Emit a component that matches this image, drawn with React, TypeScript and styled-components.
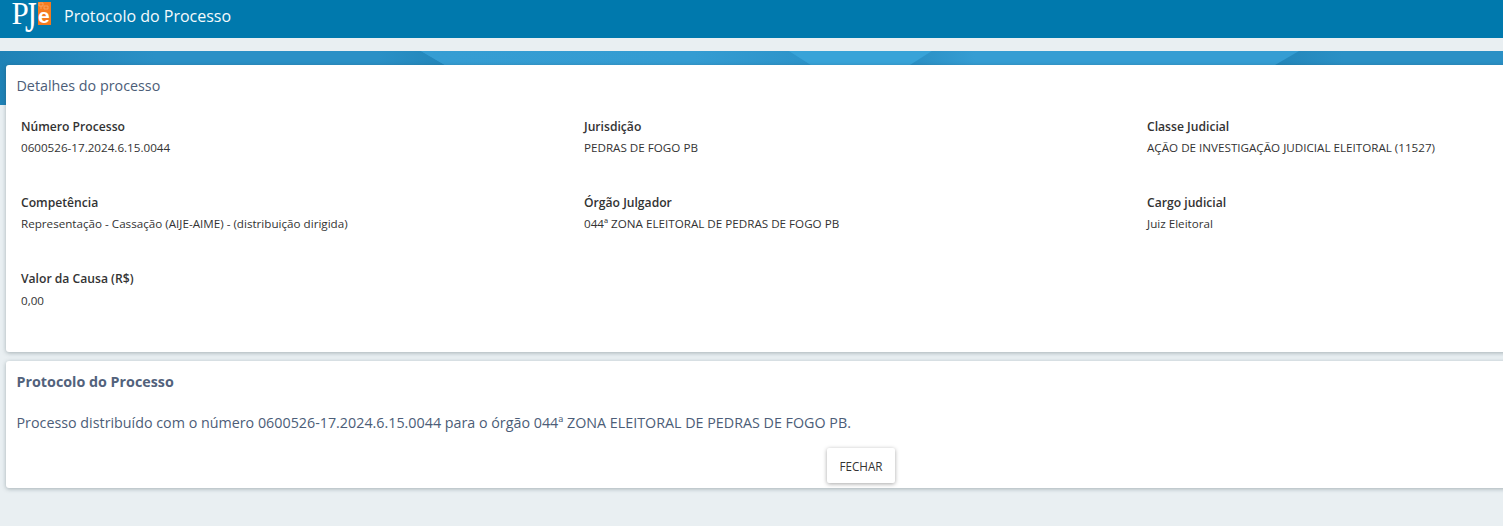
import React from 'react'
import styled, { createGlobalStyle } from 'styled-components'

const GlobalStyle = createGlobalStyle`
  html, body {
    margin: 0;
    padding: 0;
    background: #e9eff2;
    overflow: hidden;
  }
  body {
    font-family: 'Open Sans', 'Noto Sans', sans-serif;
  }
`

const Page = styled.div`
  width: 1503px;
  height: 526px;
  overflow: hidden;
  background: #e9eff2;
`

const TopBar = styled.header`
  height: 38px;
  background: #0079ad;
  display: flex;
  align-items: center;
  padding-left: 11px;
  gap: 13px;
`

const LogoBox = styled.div`
  display: flex;
  width: 40px;
  height: 38px;
`

const TopTitle = styled.h1`
  margin: 0 0 7px;
  font-size: 16px;
  font-weight: 400;
  color: #f4fafc;
`

const BannerArt = styled.svg`
  display: block;
  width: 1503px;
  height: 54px;
  margin: 13px 0 -40px;
`

const Content = styled.main`
  position: relative;
  width: 1710px;
  margin-left: 6px;
  display: flex;
  flex-direction: column;
  gap: 9px;
`

const Card = styled.section<{ $height: number }>`
  height: ${p => p.$height}px;
  box-sizing: border-box;
  background: #fff;
  border-radius: 3px;
  box-shadow: 0 1px 4px rgba(40, 60, 70, 0.35);
`

const CardHeading = styled.h2`
  margin: 0;
  padding: 11px 0 0 10.5px;
  font-size: 14.3px;
  line-height: 20px;
  font-weight: 400;
  color: #4c5d78;
`

const FieldGrid = styled.div`
  display: grid;
  grid-template-columns: repeat(3, 563px);
  grid-auto-rows: 76px;
  padding: 22px 0 0 15px;
`

const Field = styled.div`
  display: flex;
  flex-direction: column;
  gap: 4px;

  &:nth-child(7) {
    gap: 5px;
  }
`

const FieldLabel = styled.span`
  font-size: 12.15px;
  line-height: 17px;
  font-weight: 600;
  color: #333;
`

const FieldValue = styled.span`
  font-size: 11.65px;
  line-height: 17px;
  color: #333;
`

const ProtocolHeading = styled(CardHeading)`
  font-weight: 700;
  color: #52627c;
`

const Message = styled.p`
  margin: 0;
  padding: 21px 0 0 10.5px;
  font-size: 14.3px;
  line-height: 20px;
  color: #4c5d78;
`

const Actions = styled.div`
  display: flex;
  justify-content: center;
  padding-top: 15px;
`

const CloseButton = styled.button`
  width: 68px;
  height: 35px;
  padding: 0;
  border: 0;
  border-radius: 2px;
  background: #fff;
  font-family: inherit;
  font-size: 11.7px;
  color: #333;
  box-shadow: 0 1px 4px rgba(0, 0, 0, 0.35);
`

const Logo = () => (
  <svg width="40" height="38" viewBox="0 0 40 38" aria-hidden="true">
    <rect x="27" y="2" width="13" height="23" fill="#f47b20" />
    <path d="M28 3h4v3h-4zM33 6h4v3h-4zM30 6v3" fill="none" stroke="#f9b27a" strokeWidth="0.7" />
    <text x="27" y="23" fontFamily="'Liberation Sans', sans-serif" fontWeight="700" fontSize="21" fill="#fff">e</text>
    <text x="0.500" y="24" fontFamily="'Liberation Serif', serif" fontSize="31" fill="#fff">P</text>
    <text transform="translate(14 32) scale(1 1.45)" fontFamily="'Liberation Serif', serif" fontSize="30" fill="#fff">J</text>
  </svg>
)

const Banner = () => (
  <BannerArt viewBox="0 0 1503 54" aria-hidden="true">
    <defs>
      <linearGradient id="bandLeft" x1="0" x2="1" y1="0" y2="0">
        <stop offset="0" stopColor="#1f82b6" />
        <stop offset="0.35" stopColor="#2a90c6" />
        <stop offset="0.85" stopColor="#2a90c6" />
        <stop offset="1" stopColor="#2386ba" />
      </linearGradient>
      <linearGradient id="bandMiddle" x1="0" x2="1" y1="0" y2="0">
        <stop offset="0" stopColor="#359dd3" />
        <stop offset="0.7" stopColor="#349cd2" />
        <stop offset="1" stopColor="#2c93c9" />
      </linearGradient>
      <linearGradient id="bandWedge" x1="0" x2="1" y1="0" y2="0">
        <stop offset="0" stopColor="#2a8fc4" />
        <stop offset="1" stopColor="#359dd3" />
      </linearGradient>
      <linearGradient id="bandRight" x1="0" x2="1" y1="0" y2="0">
        <stop offset="0" stopColor="#2386ba" />
        <stop offset="0.3" stopColor="#2a90c5" />
        <stop offset="1" stopColor="#2a90c5" />
      </linearGradient>
    </defs>
    <rect width="1503" height="54" fill="#359dd3" />
    <polygon points="0,0 421,0 445,14 445,54 0,54" fill="url(#bandLeft)" />
    <polygon points="421,0 789,0 811,14 445,14" fill="url(#bandMiddle)" />
    <polygon points="789,0 932,0 910,14 811,14" fill="#38a3d8" />
    <polygon points="932,0 975,0 975,14 910,14" fill="url(#bandWedge)" />
    <polygon points="1299,0 1503,0 1503,14 1275,14" fill="url(#bandRight)" />
  </BannerArt>
)

const fields = [
  ['Número Processo', '0600526-17.2024.6.15.0044'],
  ['Jurisdição', 'PEDRAS DE FOGO PB'],
  ['Classe Judicial', 'AÇÃO DE INVESTIGAÇÃO JUDICIAL ELEITORAL (11527)'],
  ['Competência', 'Representação - Cassação (AIJE-AIME) - (distribuição dirigida)'],
  ['Órgão Julgador', '044ª ZONA ELEITORAL DE PEDRAS DE FOGO PB'],
  ['Cargo judicial', 'Juiz Eleitoral'],
  ['Valor da Causa (R$)', '0,00'],
]

export default function App() {
  return (
    <Page>
      <GlobalStyle />
      <TopBar>
        <LogoBox>
          <Logo />
        </LogoBox>
        <TopTitle>Protocolo do Processo</TopTitle>
      </TopBar>
      <Banner />
      <Content>
        <Card $height={287}>
          <CardHeading>Detalhes do processo</CardHeading>
          <FieldGrid>
            {fields.map(([label, value]) => (
              <Field key={label}>
                <FieldLabel>{label}</FieldLabel>
                <FieldValue>{value}</FieldValue>
              </Field>
            ))}
          </FieldGrid>
        </Card>
        <Card $height={127}>
          <ProtocolHeading>Protocolo do Processo</ProtocolHeading>
          <Message>
            Processo distribuído com o número 0600526-17.2024.6.15.0044 para o órgão 044ª ZONA ELEITORAL DE PEDRAS DE FOGO PB.
          </Message>
          <Actions>
            <CloseButton>FECHAR</CloseButton>
          </Actions>
        </Card>
      </Content>
    </Page>
  )
}
